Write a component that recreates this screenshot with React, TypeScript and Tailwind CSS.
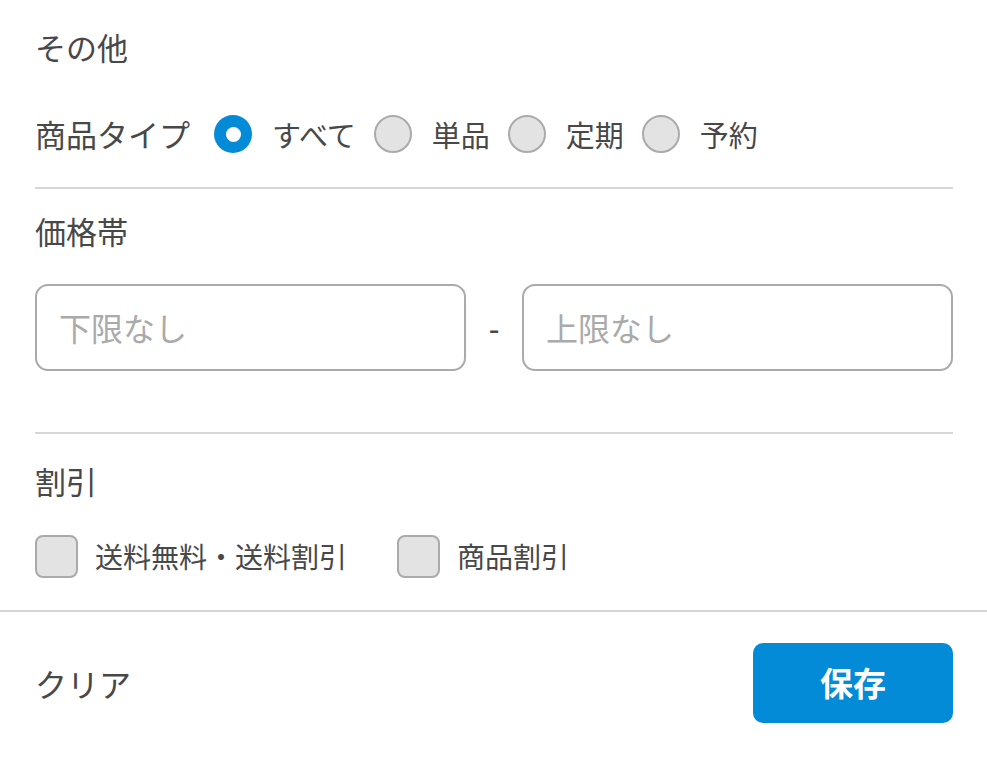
const font = { fontFamily: '"Noto Sans CJK JP", "Noto Sans", sans-serif' };

function Radio({ label, checked }: { label: string; checked?: boolean }) {
  return (
    <label className="flex items-center gap-[20px]">
      {checked ? (
        <span className="flex h-[38px] w-[38px] items-center justify-center rounded-full bg-[#038bd7]">
          <span className="h-[15px] w-[15px] rounded-full bg-white" />
        </span>
      ) : (
        <span className="h-[38px] w-[38px] rounded-full border-2 border-[#aaaaaa] bg-[#e3e3e3]" />
      )}
      <span className="text-[29px] text-[#484848]">{label}</span>
    </label>
  );
}

function Checkbox({ label }: { label: string }) {
  return (
    <label className="flex items-center gap-[17px]">
      <span className="h-[43px] w-[43px] rounded-[8px] border-2 border-[#aaaaaa] bg-[#e3e3e3]" />
      <span className="text-[28px] text-[#484848]">{label}</span>
    </label>
  );
}

export default function App() {
  return (
    <div className="h-[758px] w-[987px] bg-white text-[#484848]" style={font}>
      <div className="pl-[35px] pr-[34px]">
        <h2 className="pt-[26px] text-[31px] leading-[42px]">その他</h2>

        <div className="mt-[43px] flex items-center gap-[24px]">
          <span className="text-[31px]">商品タイプ</span>
          <div className="flex items-center gap-[18px]">
            <Radio label="すべて" checked />
            <Radio label="単品" />
            <Radio label="定期" />
            <Radio label="予約" />
          </div>
        </div>

        <div className="mt-[29px] h-[2px] bg-[#d6d6d6]" />

        <h2 className="mt-[21px] text-[31px] leading-[42px]">価格帯</h2>

        <div className="mt-[32px] flex items-center">
          <input
            placeholder="下限なし"
            className="h-[87px] flex-1 rounded-[13px] border-2 border-[#aaaaaa] px-[22px] text-[32px] text-[#484848] placeholder:text-[#aaaaaa] outline-none"
          />
          <span className="w-[56px] text-center text-[30px] font-medium">-</span>
          <input
            placeholder="上限なし"
            className="h-[87px] flex-1 rounded-[13px] border-2 border-[#aaaaaa] px-[22px] text-[32px] text-[#484848] placeholder:text-[#aaaaaa] outline-none"
          />
        </div>

        <div className="mt-[61px] h-[2px] bg-[#d6d6d6]" />

        <h2 className="mt-[26px] text-[31px] leading-[42px]">割引</h2>

        <div className="mt-[33px] flex items-center gap-[50px]">
          <Checkbox label="送料無料・送料割引" />
          <Checkbox label="商品割引" />
        </div>
      </div>

      <div className="mt-[32px] h-[2px] bg-[#d6d6d6]" />

      <div className="flex items-center justify-between pl-[35px] pr-[34px] pt-[31px]">
        <button className="text-[32px] text-[#484848]">クリア</button>
        <button className="h-[80px] w-[200px] rounded-[10px] bg-[#038bd7] text-[33px] font-bold text-white">
          保存
        </button>
      </div>
    </div>
  );
}
